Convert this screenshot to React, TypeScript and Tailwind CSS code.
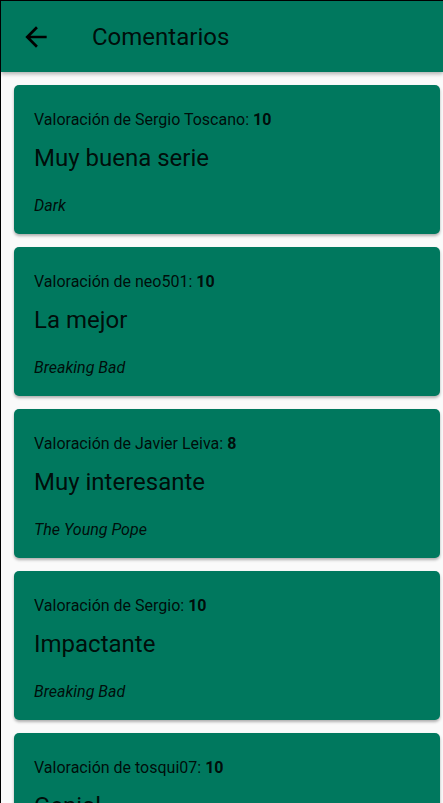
import React from 'react';

interface Comment {
  id: number;
  author: string;
  score: number;
  title: string;
  series: string;
}

const comments: Comment[] = [
  { id: 1, author: 'Sergio Toscano', score: 10, title: 'Muy buena serie', series: 'Dark' },
  { id: 2, author: 'neo501', score: 10, title: 'La mejor', series: 'Breaking Bad' },
  { id: 3, author: 'Javier Leiva', score: 8, title: 'Muy interesante', series: 'The Young Pope' },
  { id: 4, author: 'Sergio', score: 10, title: 'Impactante', series: 'Breaking Bad' },
  { id: 5, author: 'tosqui07', score: 10, title: 'Genial', series: 'Dark' },
];

const CommentCard: React.FC<{ c: Comment }> = ({ c }) => (
  <div className="shrink-0 rounded-[5px] bg-[#00785e] px-5 pt-[23px] pb-[16px] shadow-[0_2px_3px_rgba(0,0,0,0.3)] text-black/90">
    <p className="text-[16px] leading-6">
      Valoración de {c.author}: <span className="font-bold">{c.score}</span>
    </p>
    <h2 className="mt-[11px] text-[24px] leading-[30px]">{c.title}</h2>
    <p className="mt-[21px] text-[16px] leading-6 italic">{c.series}</p>
  </div>
);

export default function App() {
  return (
    <div
      className="h-[803px] overflow-hidden border-l border-t border-black bg-[#fafafa]"
      style={{ fontFamily: 'Roboto, "Noto Sans", sans-serif' }}
    >
      <header className="relative z-10 flex h-[71px] items-center bg-[#00785e] shadow-[0_2px_4px_rgba(0,0,0,0.3)]">
        <svg width="32" height="32" viewBox="0 0 24 24" className="ml-[19px]" fill="#000">
          <path d="M20 11H7.83l5.59-5.59L12 4l-8 8 8 8 1.41-1.41L7.83 13H20v-2z" />
        </svg>
        <h1 className="ml-[40px] text-[24px] text-black/90">Comentarios</h1>
      </header>
      <main className="flex flex-col gap-[13px] px-[13px] pt-[13px] pr-[3px]">
        {comments.map((c) => (
          <CommentCard key={c.id} c={c} />
        ))}
      </main>
    </div>
  );
}
